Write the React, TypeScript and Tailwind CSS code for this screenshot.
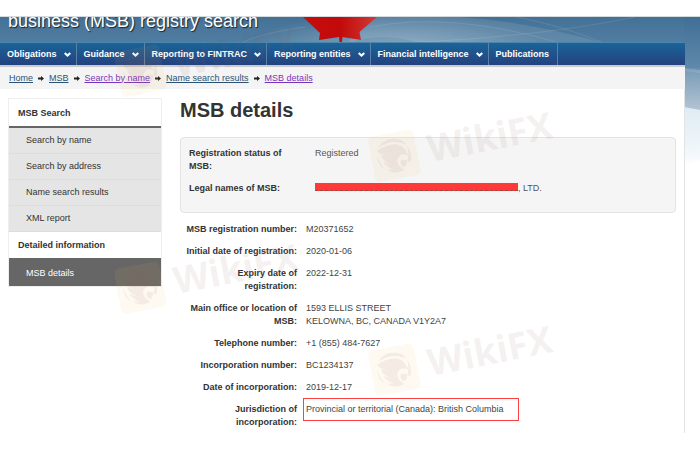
import { Fragment } from "react";

const MENU = [
  { label: "Obligations", dropdown: true },
  { label: "Guidance", dropdown: true },
  { label: "Reporting to FINTRAC", dropdown: true },
  { label: "Reporting entities", dropdown: true },
  { label: "Financial intelligence", dropdown: true },
  { label: "Publications", dropdown: false },
];

const BREADCRUMBS = [
  { label: "Home", visited: false },
  { label: "MSB", visited: false },
  { label: "Search by name", visited: true },
  { label: "Name search results", visited: false },
  { label: "MSB details", visited: true },
];

const SEARCH_LINKS = ["Search by name", "Search by address", "Name search results", "XML report"];

const DETAILS = [
  { label: "MSB registration number:", lines: ["M20371652"] },
  { label: "Initial date of registration:", lines: ["2020-01-06"] },
  { label: "Expiry date of registration:", lines: ["2022-12-31"] },
  { label: "Main office or location of MSB:", lines: ["1593 ELLIS STREET", "KELOWNA, BC, CANADA V1Y2A7"] },
  { label: "Telephone number:", lines: ["+1 (855) 484-7627"] },
  { label: "Incorporation number:", lines: ["BC1234137"] },
  { label: "Date of incorporation:", lines: ["2019-12-17"] },
  {
    label: "Jurisdiction of incorporation:",
    lines: ["Provincial or territorial (Canada): British Columbia"],
    outlined: true,
  },
];

const WATERMARKS = [
  "left-[116px] top-[34px]",
  "left-[370px] top-[119px]",
  "left-[116px] top-[251px]",
  "left-[370px] top-[333px]",
];

function Backdrop() {
  return (
    <svg
      className="absolute inset-x-0 top-0 h-[150px] w-full"
      viewBox="0 0 700 150"
      preserveAspectRatio="xMaxYMin slice"
      aria-hidden
    >
      <defs>
        <linearGradient id="sky" x1="0" y1="0" x2="0" y2="1">
          <stop offset="0" stopColor="#416f96" />
          <stop offset="0.54" stopColor="#5f88aa" />
          <stop offset="0.6" stopColor="#7d9fba" />
          <stop offset="1" stopColor="#b3c4d2" />
        </linearGradient>
        <linearGradient id="banner" x1="0" y1="0" x2="0" y2="1">
          <stop offset="0" stopColor="#447196" />
          <stop offset="1" stopColor="#507da1" />
        </linearGradient>
        <linearGradient id="mist" x1="0" y1="0" x2="0" y2="1">
          <stop offset="0" stopColor="#dfebf3" />
          <stop offset="0.8" stopColor="#f2f8fb" />
          <stop offset="1" stopColor="#ffffff" />
        </linearGradient>
        <radialGradient id="glow" cx="0.5" cy="0.6" r="0.5">
          <stop offset="0" stopColor="#9fb9cb" stopOpacity="0.7" />
          <stop offset="1" stopColor="#9fb9cb" stopOpacity="0" />
        </radialGradient>
        <linearGradient id="leaf" x1="0" y1="0" x2="1" y2="0">
          <stop offset="0" stopColor="#c50d0d" />
          <stop offset="0.5" stopColor="#c20a0a" />
          <stop offset="1" stopColor="#d23a3a" />
        </linearGradient>
      </defs>
      <path d="M0 0H700V93H0Z" fill="url(#sky)" />
      <path d="M0 0H684V26H0Z" fill="url(#banner)" />
      <ellipse cx="395" cy="24" rx="150" ry="34" fill="url(#glow)" />
      <path d="M350 2Q470 -12 604 26H420Q380 14 350 26Z" fill="#ffffff" opacity="0.1" />
      <g fill="none" stroke="#ffffff" strokeOpacity="0.1">
        <path d="M516 0Q560 8 604 26" />
        <path d="M370 10Q450 -6 560 26" />
        <path d="M400 26Q540 20 635 0" />
        <path d="M240 26Q270 14 305 10" />
      </g>
      <path d="M684 51L700 53V56L684 54Z" fill="#ffffff" opacity="0.15" />
      <path d="M684 90L700 93V143L684 149Z" fill="url(#mist)" />
      <path
        d="M303 0L320 16L319 23L339 20L339.500 25H342L342.500 20L361 23L359.500 15L377 0Z"
        fill="url(#leaf)"
      />
    </svg>
  );
}

function Chevron() {
  return (
    <svg className="h-[5px] w-[7px]" viewBox="0 0 7 5" fill="none" aria-hidden>
      <path d="M0.700 1L3.500 3.600L6.300 1" stroke="#fff" strokeWidth="2" />
    </svg>
  );
}

function CrumbArrow() {
  return (
    <svg className="mx-[5px] h-[5px] w-[6px]" viewBox="0 0 6 5" aria-hidden>
      <path d="M0 1.600H3V0L6 2.500L3 5V3.400H0Z" fill="#222" />
    </svg>
  );
}

function Watermark({ className }: { className: string }) {
  return (
    <svg
      className={`pointer-events-none absolute h-[46px] w-[190px] -rotate-[11deg] overflow-visible ${className}`}
      viewBox="0 0 190 46"
      aria-hidden
    >
      <rect width="46" height="46" rx="5" fill="#f2b850" opacity="0.08" />
      <g fill="#8a5a60" opacity="0.08">
        <path d="M9 12Q15 5 24 6Q33 7 37 14L31 11Q20 7 9 12Z" />
        <path d="M7 15Q17 10 27 12Q33 14 35 20L37 26L34 24L30 23L27 25Q23 28 26 34L30 39Q20 42 13 35L20 37Q13 32 11 27L18 31Q10 25 10 20L16 23Q9 19 7 15Z" />
        <path d="M37 15Q42 25 37 33L35 30Q39 23 37 15Z" />
        <path d="M29 28L35 30Q33 36 30 36Q26 33 29 28Z" />
        <path d="M6 20Q5 29 11 35Q7 27 6 20Z" />
        <text x="57" y="36" fontSize="37" fontWeight="700" fontFamily="'Open Sans', sans-serif">
          WikiFX
        </text>
      </g>
    </svg>
  );
}

function SideNav() {
  return (
    <nav className="w-[154px] shrink-0 self-start border border-[#eee] pt-px" aria-label="MSB Search">
      <h2 className="flex h-7 items-center border-b-2 border-[#666] px-[9px] font-bold">MSB Search</h2>
      <ul>
        {SEARCH_LINKS.map((label) => (
          <li key={label} className="border-b border-[#ddd] bg-[#e5e5e5]">
            <a href="#" className="flex h-[25px] items-center px-[17px]">
              {label}
            </a>
          </li>
        ))}
      </ul>
      <h2 className="flex h-7 items-center border-b-2 border-[#666] px-[9px] font-bold">
        Detailed information
      </h2>
      <a href="#" aria-current="page" className="flex h-[26px] items-center bg-[#666] px-[17px] text-white">
        MSB details
      </a>
    </nav>
  );
}

export default function App() {
  return (
    <div className="relative bg-white pt-4 font-['Liberation_Sans',Arial,sans-serif] text-[9px] leading-[13px] text-[#333]">
      <div className="relative border-t border-[#d4dade]">
        <Backdrop />
        <div className="relative mr-[15px]">
          <header>
            <div className="h-[25px] overflow-hidden px-2">
              <p className="text-lg leading-2 text-white [text-shadow:1px_1px_1px_#222]">
                business (MSB) registry search
              </p>
            </div>
            <nav
              className="flex h-[25px] border-t border-b-2 border-t-[#4d86ab] border-b-[#ccc] bg-linear-to-b from-[#186499] to-[#23417f]"
              aria-label="Main menu"
            >
              {MENU.map(({ label, dropdown }) => (
                <a
                  key={label}
                  href="#"
                  className={`flex items-center gap-[7px] border-r border-[#5a80a8] pl-[7px] font-bold text-white ${dropdown ? "pr-[5px]" : "pr-2"}`}
                >
                  {label}
                  {dropdown && <Chevron />}
                </a>
              ))}
            </nav>
            <nav className="flex h-[22px] items-center bg-[#f4f4f4] px-[9px]" aria-label="Breadcrumb">
              {BREADCRUMBS.map(({ label, visited }, i) => (
                <Fragment key={label}>
                  {i > 0 && <CrumbArrow />}
                  <a href="#" className={`underline ${visited ? "text-[#7834bc]" : "text-[#295376]"}`}>
                    {label}
                  </a>
                </Fragment>
              ))}
            </nav>
          </header>

          <div className="flex gap-[18px] border-r border-[#e3e3e3] bg-white pt-[9px] pr-2 pb-1 pl-2">
            <SideNav />
            <main className="min-w-0 flex-1">
              <h1 className="text-xl leading-6 font-bold">MSB details</h1>
              <dl className="mt-[15px] grid grid-cols-[116px_1fr] gap-x-[10px] gap-y-[9px] rounded-[4px] border border-[#e3e3e3] bg-[#f5f5f5] px-2 pt-[9px] pb-[17px]">
                <dt className="font-bold">Registration status of MSB:</dt>
                <dd className="text-[#555]">Registered</dd>
                <dt className="font-bold">Legal names of MSB:</dt>
                <dd className="text-[#555]">
                  <span className="inline-block h-2 w-[203px] border-b border-dashed border-[#944] bg-[#ff3838]" />
                  , LTD.
                </dd>
              </dl>
              <dl className="mt-[10px] grid grid-cols-[114px_1fr] gap-x-[9px] gap-y-[9px] pl-[3px]">
                {DETAILS.map(({ label, lines, outlined }) => (
                  <Fragment key={label}>
                    <dt className="text-right font-bold">{label}</dt>
                    <dd className="text-[#444]">
                      {lines.map((line) => (
                        <p
                          key={line}
                          className={
                            outlined
                              ? "-mx-[3px] -my-[5px] w-[216px] py-[5px] pl-[3px] outline-1 -outline-offset-1 outline-[#ff4040]"
                              : undefined
                          }
                        >
                          {line}
                        </p>
                      ))}
                    </dd>
                  </Fragment>
                ))}
              </dl>
            </main>
          </div>
        </div>
      </div>
      {WATERMARKS.map((position) => (
        <Watermark key={position} className={position} />
      ))}
    </div>
  );
}
